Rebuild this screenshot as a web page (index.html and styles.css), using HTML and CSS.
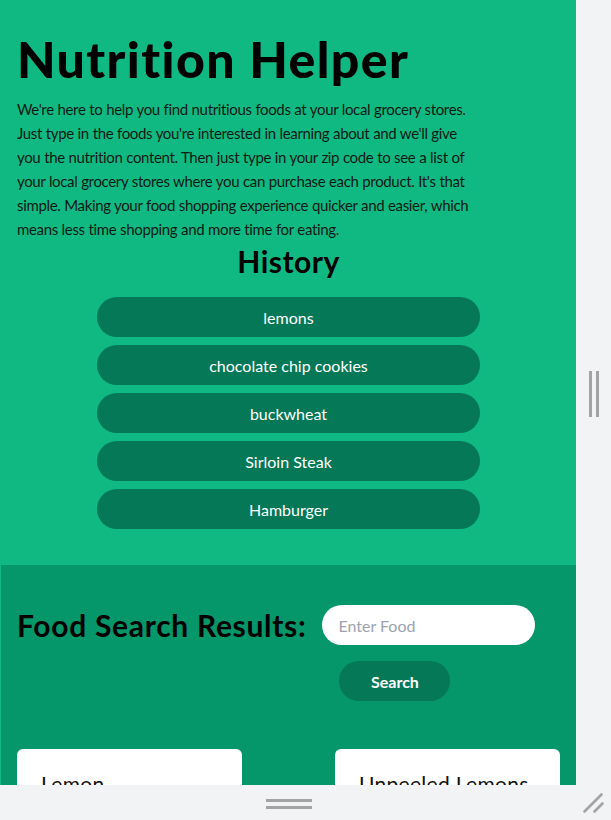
FILE: index.html
```html
<!DOCTYPE html>
<html lang="en">
<head>
<meta charset="utf-8">
<title>Nutrition Helper</title>
<link rel="stylesheet" href="styles.css">
</head>
<body>
<div class="shell">
  <div class="frame">
    <main class="app">
      <section class="intro">
        <h1 class="title">Nutrition Helper</h1>
        <p class="lead">We're here to help you find nutritious foods at your local grocery stores. Just type in the foods you're interested in learning about and we'll give you the nutrition content. Then just type in your zip code to see a list of your local grocery stores where you can purchase each product. It's that simple. Making your food shopping experience quicker and easier, which means less time shopping and more time for eating.</p>
        <h2 class="history-title">History</h2>
        <div class="history">
          <button class="pill">lemons</button>
          <button class="pill">chocolate chip cookies</button>
          <button class="pill">buckwheat</button>
          <button class="pill">Sirloin Steak</button>
          <button class="pill">Hamburger</button>
        </div>
      </section>
      <section class="results">
        <div class="search-row">
          <h2 class="results-title">Food Search Results:</h2>
          <form class="search-form">
            <input class="search-input" type="text" placeholder="Enter Food">
            <button class="search-btn" type="button">Search</button>
          </form>
        </div>
        <div class="cards">
          <div class="card"><h3 class="card-title">Lemon</h3></div>
          <div class="card"><h3 class="card-title">Unpeeled Lemons</h3></div>
        </div>
      </section>
    </main>
  </div>
  <div class="gutter-right">
    <span class="vgrip"></span>
  </div>
  <div class="gutter-bottom">
    <span class="hgrip"></span>
  </div>
  <div class="corner">
    <svg width="35" height="35" viewBox="0 0 35 35"><path d="M8.5 26.5 L25.5 9.5 M18.5 26.5 L26.5 18.5" stroke="#a3a3a3" stroke-width="2.6" stroke-linecap="round" fill="none"/></svg>
  </div>
</div>
</body>
</html>
```

FILE: styles.css
```css
* { box-sizing: border-box; }
html, body { margin: 0; padding: 0; }
body {
  background: #f2f3f5;
  font-family: Lato, "Open Sans", sans-serif;
  width: 611px;
  height: 820px;
  overflow: hidden;
}
.shell {
  display: grid;
  grid-template-columns: 576px 35px;
  grid-template-rows: 785px 35px;
  width: 611px;
  height: 820px;
}
.frame {
  overflow: hidden;
  background: #10b981;
  padding: 1px 0 0 1px;
}
.app { width: 575px; }
.intro {
  background: #10b981;
  padding: 30px 16px 36px 16px;
}
.title {
  margin: 0;
  font-size: 50px;
  line-height: 56px;
  font-weight: 900;
  letter-spacing: 1.4px;
  color: #000;
}
.lead {
  margin: 10px 0 0 0;
  max-width: 457px;
  font-size: 15px;
  letter-spacing: -0.35px;
  word-spacing: 0.3px;
  line-height: 24px;
  color: #0b1a14;
}
.history-title {
  margin: 2px 0 0 0;
  text-align: center;
  font-size: 30px;
  line-height: 36px;
  font-weight: 700;
  letter-spacing: 0.5px;
  color: #000;
}
.history {
  display: flex;
  flex-direction: column;
  align-items: center;
  gap: 8px;
  margin-top: 18px;
}
.pill {
  width: 383px;
  height: 40px;
  border: none;
  border-radius: 20px;
  background: #047857;
  color: #fff;
  font-family: inherit;
  font-size: 16px;
  padding: 0;
}
.results {
  background: #059669;
  padding: 40px 16px 0 16px;
}
.search-row {
  display: flex;
  align-items: flex-start;
  gap: 16px;
}
.results-title {
  margin: 0;
  font-size: 30px;
  line-height: 40px;
  font-weight: 700;
  letter-spacing: 0.7px;
  color: #000;
}
.search-form {
  display: flex;
  flex-direction: column;
  align-items: flex-start;
  gap: 16px;
}
.search-input {
  width: 213px;
  height: 40px;
  border: none;
  border-radius: 20px;
  padding: 0 16px;
  font-family: inherit;
  font-size: 16px;
  background: #fff;
  outline: none;
}
.search-input::placeholder { color: #9ca3af; }
.search-btn {
  margin-left: 17px;
  width: 111px;
  height: 40px;
  border: none;
  border-radius: 20px;
  background: #047857;
  color: #fff;
  font-family: inherit;
  font-weight: 700;
  font-size: 16px;
}
.cards {
  display: flex;
  justify-content: space-between;
  margin-top: 48px;
}
.card {
  width: 225px;
  height: 160px;
  background: #fff;
  border-radius: 6px;
  padding: 21px 24px;
}
.card-title {
  margin: 0;
  font-size: 21px;
  line-height: 28px;
  font-weight: 400;
  letter-spacing: 0.3px;
  color: #111;
}
.gutter-right {
  grid-column: 2;
  grid-row: 1;
  display: flex;
  align-items: center;
  justify-content: center;
}
.vgrip {
  width: 10px;
  height: 46px;
  border-left: 3px solid #a3a3a3;
  border-right: 3px solid #a3a3a3;
  margin-top: 2px;
}
.gutter-bottom {
  grid-column: 1;
  grid-row: 2;
  display: flex;
  align-items: center;
  justify-content: center;
}
.hgrip {
  width: 46px;
  height: 10px;
  border-top: 3px solid #a3a3a3;
  border-bottom: 3px solid #a3a3a3;
  margin-left: 2px;
  margin-top: 2px;
}
.corner {
  grid-column: 2;
  grid-row: 2;
  display: flex;
}
```
